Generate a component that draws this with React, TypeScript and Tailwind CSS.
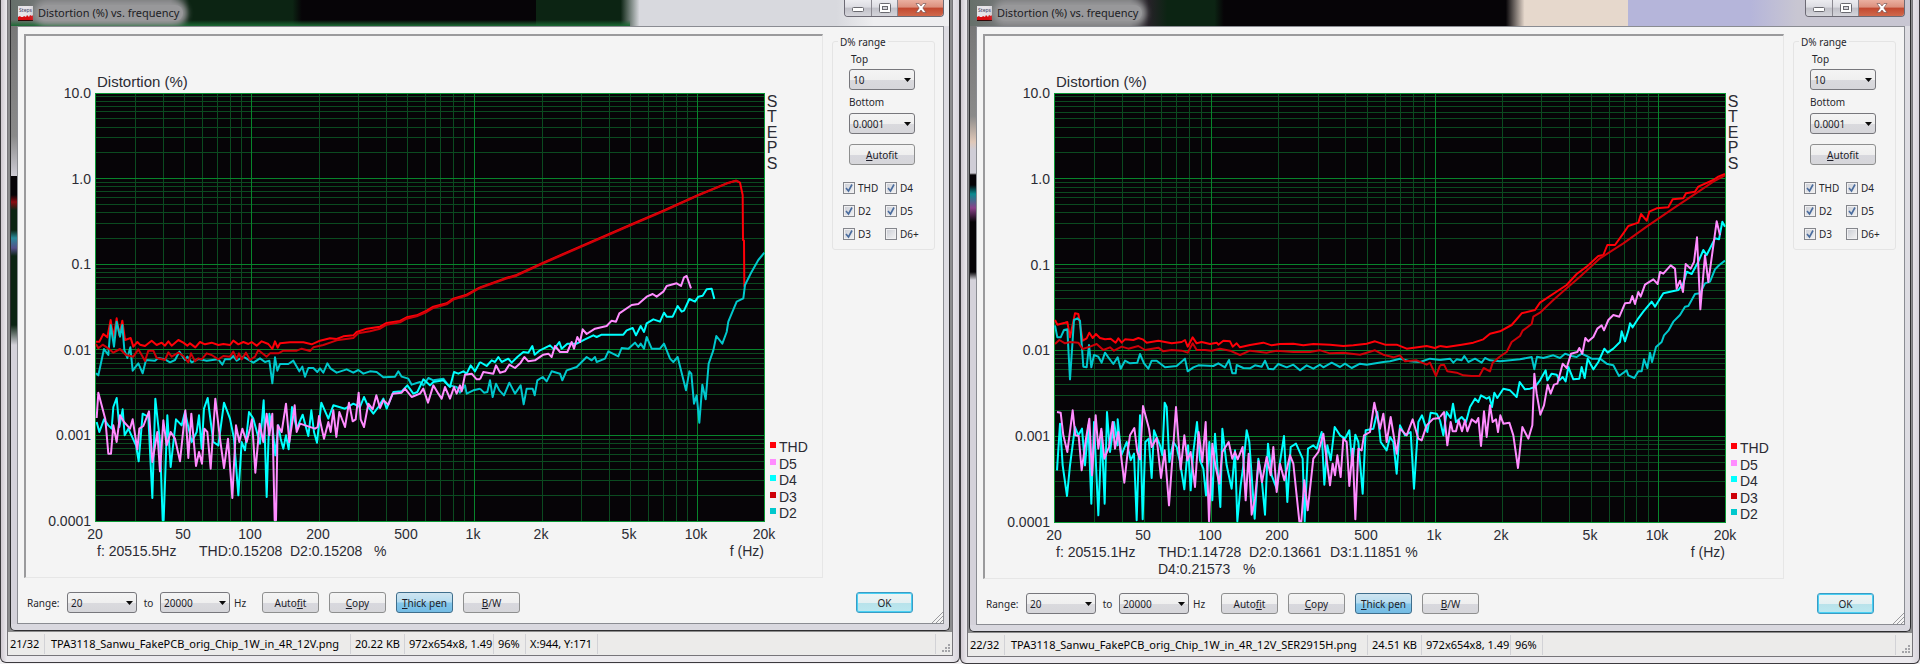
import { ReactNode } from 'react'

// Traces are sampled in thirds of a pixel. Each one is split at 1 kHz: low band, then high band.
const UNIT = 1 / 3
const HIGH_BAND = 1440

type Trace = { name: string; color: string; low: string; high: string }

type Measurement = {
  index: string
  file: string
  fileWidth: string
  size: string
  cursor?: string
  frame: string
  titleBar: string
  edge: string
  width: number
  height: number
  plotRight: number
  plotBottom: number
  originX: number
  readout: [number, number, string][]
  traces: Trace[]
}

const original: Measurement = {
  index: '21/32',
  file: 'TPA3118_Sanwu_FakePCB_orig_Chip_1W_in_4R_12V.png',
  fileWidth: 'w-[306px]',
  size: '20.22 KB',
  cursor: 'X:944, Y:171',
  frame: 'mx-[2px]',
  titleBar:
    '[background-size:66%_100%,100%_100%] bg-no-repeat bg-[linear-gradient(0deg,#1c6a34_0px,#1c6a3400_6px),linear-gradient(90deg,#66706a_0%,#77787a_4%,#77787a_17%,#0c2413_19%,#0c2413_30%,#060407_31%,#060407_56%,#0c2413_56%,#0c2413_65%,#d8d9de_67%,#d8d9de_88%,#eeeef0_92%)]',
  edge: 'bg-[linear-gradient(180deg,#777_0px,#8a8a8a_110px,#cfcdd6_150px,#cfcdd6_147px,#060407_149px,#060407_169px,#8a0a10_176px,#0c2413_184px,#0c2413_204px,#2a8a9a_212px,#55508a_222px,#0c2413_230px,#0c2413_299px,#d4d2da_319px)]',
  width: 796,
  height: 541,
  plotRight: 739,
  plotBottom: 485,
  originX: 26,
  readout: [
    [71, 520, 'f: 20515.5Hz'],
    [173, 520, 'THD:0.15208'],
    [264, 520, 'D2:0.15208'],
    [348, 520, '%'],
  ],
  traces: [
    {
      name: 'THD',
      color: '#ff0008',
      low: '288,29 298,29 310,6 322,16 332,-36 340,16 350,-41 358,9 367,-34 375,24 392,18 400,44 412,30 420,38 435,42 455,26 470,39 485,32 495,41 505,28 515,41 535,24 550,32 562,41 570,34 586,46 600,30 615,37 635,32 655,39 670,36 690,39 700,26 715,37 730,30 745,36 755,30 770,41 785,28 805,36 817,51 825,28 833,47 840,34 870,31 910,31 935,37 960,26 990,19 1010,21 1030,13 1060,10 1070,0 1100,-10 1140,-16 1160,-27 1200,-33 1220,-44 1250,-50 1280,-64 1300,-76 1340,-86 1360,-100 1400,-112 1440,-134',
      high: '0,-134 75,-161 110,-171 185,-206 300,-256 450,-321 550,-364 655,-411 740,-446 768,-454 780,-448 788,-411 789,-276 792,-274 793,-136',
    },
    {
      name: 'D2',
      color: '#00c8cd',
      low: '288,124 295,130 312,51 325,69 332,-21 342,44 350,-31 360,14 367,-21 373,54 382,78 391,46 398,116 415,94 428,124 438,84 465,86 475,78 495,82 510,91 525,84 538,59 555,84 562,74 575,91 595,81 620,86 655,82 667,98 675,82 690,82 700,72 710,86 730,74 760,92 780,79 795,90 808,86 817,154 825,76 832,116 840,96 865,96 880,86 898,118 907,104 915,134 925,108 940,108 952,120 960,109 970,122 982,94 992,110 1010,122 1040,112 1060,122 1075,114 1090,125 1110,118 1130,120 1150,136 1185,134 1195,118 1205,134 1225,140 1235,158 1260,150 1270,160 1285,138 1300,145 1330,140 1345,160 1370,165 1380,182 1395,160 1400,185 1420,175 1440,170',
      high: '0,170 12,182 22,180 30,145 38,195 48,155 58,175 72,190 88,152 105,185 122,160 131,217 140,170 158,170 164,190 172,145 188,135 200,148 215,118 240,125 247,145 260,115 290,105 320,75 335,85 345,75 350,90 375,80 385,58 415,73 425,48 445,50 465,32 475,45 482,35 492,50 500,15 515,50 540,50 552,35 570,80 580,90 593,75 618,175 628,118 634,125 642,215 650,190 658,272 667,158 677,202 686,95 700,55 709,12 727,35 740,0 745,-31 770,-91 790,-101 795,-141 815,-181 835,-216 853,-238',
    },
    {
      name: 'D3',
      color: '#cd0008',
      low: '288,36 295,49 308,38 325,49 340,62 360,51 378,69 400,74 415,52 425,69 435,87 445,56 460,56 470,78 495,84 505,61 515,74 535,62 550,72 565,91 573,64 585,88 595,79 605,82 620,64 635,69 655,82 670,72 690,74 700,59 710,81 717,64 725,82 738,62 750,84 765,74 775,54 800,74 810,64 835,64 850,56 890,56 905,50 930,57 940,46 970,39 1010,25 1060,18 1075,4 1110,-2 1140,-10 1160,-22 1200,-29 1220,-40 1250,-47 1280,-60 1300,-72 1340,-83 1360,-97 1400,-109 1440,-132',
      high: '0,-132 75,-159 110,-169 185,-204 300,-254 450,-319 550,-362 655,-410 740,-445 768,-454 776,-450',
    },
    {
      name: 'D4',
      color: '#00ffff',
      low: '290,270 298,300 312,262 325,280 335,290 340,225 350,198 358,285 368,232 374,310 385,290 408,340 416,388 428,245 445,255 457,498 466,200 480,330 488,565 491,565 502,250 512,405 528,262 545,280 555,240 575,330 590,300 597,250 605,350 612,230 623,198 640,330 655,340 672,212 690,260 702,320 715,490 725,330 735,355 747,240 760,260 780,335 791,205 800,495 808,245 818,290 826,370 835,280 842,320 850,350 858,310 866,352 876,225 890,290 908,248 925,312 934,235 942,300 951,332 964,212 985,260 1000,220 1035,230 1060,215 1080,225 1092,195 1105,225 1120,245 1135,225 1150,200 1160,230 1180,180 1205,178 1222,160 1240,185 1252,180 1270,142 1290,160 1300,150 1330,145 1350,165 1362,120 1375,125 1390,118 1400,125 1412,100 1425,118 1440,90',
      high: '0,90 20,102 35,85 45,90 55,75 65,90 85,80 95,92 112,75 130,60 145,62 157,42 164,68 180,55 210,40 222,52 238,30 245,50 262,35 290,35 315,22 340,10 350,15 365,8 430,8 440,-5 458,-12 468,10 482,-18 492,0 500,-26 520,-38 540,-31 552,-58 560,-46 578,-46 593,-78 605,-61 612,-64 628,-99 645,-91 655,-106 668,-109 680,-128 695,-130 703,-99',
    },
    {
      name: 'D5',
      color: '#ff8cff',
      low: '290,258 295,182 316,262 325,365 333,365 340,280 350,330 360,250 372,270 390,290 398,262 412,352 418,290 430,282 447,238 457,390 472,300 480,418 490,265 500,340 512,300 525,320 540,388 556,235 565,378 574,245 588,402 597,360 606,395 613,290 622,300 632,410 646,200 660,320 672,408 684,320 697,498 708,280 718,330 727,290 740,330 750,290 756,262 766,422 779,275 790,330 800,245 808,310 817,245 824,565 828,565 833,280 845,300 858,215 868,330 884,220 890,300 900,275 945,290 953,285 957,252 972,320 985,270 992,300 1000,235 1009,315 1018,240 1035,285 1047,212 1058,268 1067,262 1076,182 1082,262 1092,285 1105,215 1118,232 1129,190 1140,228 1150,205 1165,218 1178,185 1205,182 1215,170 1235,195 1260,185 1270,170 1284,212 1300,160 1315,185 1325,200 1335,165 1350,200 1362,165 1370,185 1380,160 1385,178 1395,128 1415,125 1430,142 1440,142',
      high: '0,142 10,120 40,125 48,100 60,122 75,118 88,98 105,108 122,92 133,75 145,88 165,85 190,68 205,65 215,75 225,42 240,60 262,60 275,30 282,50 292,15 300,30 308,-8 320,6 345,-10 380,-18 395,-34 408,-31 418,-56 455,-81 475,-84 500,-106 518,-114 530,-106 550,-121 560,-138 590,-146 603,-138 612,-164 620,-168 633,-131',
    },
  ],
}

const modified: Measurement = {
  index: '22/32',
  file: 'TPA3118_Sanwu_FakePCB_orig_Chip_1W_in_4R_12V_SER2915H.png',
  fileWidth: 'w-[363px]',
  size: '24.51 KB',
  frame: 'mx-px',
  titleBar:
    'bg-[linear-gradient(90deg,#66706a_0%,#77787a_4%,#77787a_17%,#262228_19%,#0c2413_21%,#0c2413_26%,#060407_27%,#060407_57%,#e6d8cc_59%,#e6d8cc_70%,#b5b5da_70%,#b5b5da_83%,#c8c6d2_88%)]',
  edge: 'bg-[linear-gradient(180deg,#777_0px,#8a8a8a_90px,#e0c8b8_116px,#cfcdd6_124px,#cfcdd6_147px,#060407_149px,#060407_159px,#0a8a90_168px,#8a408a_182px,#060407_196px,#060407_246px,#d4d2da_254px)]',
  width: 798,
  height: 542,
  plotRight: 741,
  plotBottom: 486,
  originX: 25,
  readout: [
    [71, 521, 'f: 20515.1Hz'],
    [173, 521, 'THD:1.14728'],
    [264, 521, 'D2:0.13661'],
    [345, 521, 'D3:1.11851 %'],
    [173, 538, 'D4:0.21573'],
    [258, 538, '%'],
  ],
  traces: [
    {
      name: 'THD',
      color: '#ff0008',
      low: '285,-36 292,-22 315,-28 322,-30 330,16 345,-56 355,-54 368,26 380,19 388,2 398,18 408,6 420,18 435,22 452,20 467,32 475,19 485,32 495,22 520,24 535,18 548,22 560,32 595,26 615,30 635,34 665,30 675,24 683,44 698,16 710,34 725,30 750,36 770,32 775,38 790,26 810,28 818,44 830,34 840,46 870,39 910,32 935,40 960,36 1000,35 1030,40 1060,36 1110,38 1150,42 1180,40 1220,35 1245,28 1275,38 1310,38 1340,50 1400,42 1425,48 1440,42',
      high: '0,42 20,45 65,38 100,32 130,22 150,5 180,-2 215,-21 245,-56 285,-66 300,-88 380,-141 410,-174 440,-196 475,-228 490,-231 502,-261 525,-261 550,-296 565,-318 595,-328 603,-354 620,-334 628,-361 650,-371 685,-374 698,-398 730,-401 738,-416 765,-421 775,-436 820,-456 835,-466 855,-474',
    },
    {
      name: 'D2',
      color: '#00c8cd',
      low: '285,-20 292,16 302,16 312,-6 322,-8 330,142 342,-36 352,-41 360,-34 370,104 380,106 387,39 394,106 402,69 415,74 425,92 435,62 445,76 460,96 473,76 482,110 495,86 510,94 532,92 540,66 552,94 565,110 575,86 590,86 615,106 650,102 675,80 683,118 700,106 715,100 760,102 775,94 795,106 807,84 817,124 827,124 830,99 850,108 870,109 885,100 905,104 915,86 925,110 940,112 955,96 980,106 1000,98 1020,115 1040,100 1060,110 1080,98 1090,106 1115,92 1140,105 1155,95 1175,108 1200,95 1220,98 1270,90 1290,88 1320,80 1350,88 1380,90 1410,80 1440,84',
      high: '0,84 30,80 40,92 50,82 65,85 73,72 85,90 105,80 125,92 135,78 150,85 180,88 240,82 275,75 283,112 291,74 310,78 340,70 360,78 375,65 395,72 410,75 425,65 440,72 455,80 480,80 500,95 520,100 537,132 560,115 565,130 583,138 595,118 605,118 612,82 622,108 630,62 636,90 648,45 665,30 672,10 685,-4 700,-31 720,-51 735,-76 745,-78 765,-114 780,-116 795,-146 810,-151 825,-188 838,-201 855,-214',
    },
    {
      name: 'D3',
      color: '#cd0008',
      low: '285,36 298,24 315,34 330,30 355,32 368,51 390,44 410,36 430,54 450,46 462,56 485,44 505,50 535,42 555,54 595,47 610,58 635,54 665,56 683,62 698,34 710,54 735,54 755,56 780,50 810,56 840,69 870,56 920,62 950,56 1000,60 1050,60 1080,55 1110,64 1150,62 1200,68 1245,55 1270,68 1300,76 1320,70 1335,88 1370,85 1400,98 1410,92 1428,132 1440,100',
      high: '0,100 12,98 22,118 50,122 70,130 95,132 118,132 131,108 150,118 158,92 178,75 200,60 215,30 240,12 248,-4 275,-24 280,-46 300,-58 340,-96 385,-136 420,-166 480,-221 550,-266 620,-316 700,-371 780,-424 820,-451 855,-470',
    },
    {
      name: 'D4',
      color: '#00ffff',
      low: '291,415 300,275 308,400 321,492 330,400 345,285 355,310 366,290 375,400 385,280 394,515 402,270 415,550 425,300 434,515 441,240 450,360 462,270 473,340 473,262 484,370 500,330 512,385 522,365 530,565 540,250 548,562 556,330 566,320 575,438 582,295 600,340 607,370 614,212 620,225 628,390 640,330 650,345 660,390 673,472 684,340 692,475 700,360 711,270 720,385 730,410 738,490 748,330 757,505 765,305 781,525 787,290 800,400 815,470 825,355 832,568 842,460 850,400 860,295 868,330 884,560 895,380 905,440 915,548 924,335 935,430 950,470 960,390 972,312 982,510 992,345 1008,335 1028,380 1034,568 1044,350 1060,340 1070,350 1085,300 1093,458 1102,340 1112,385 1124,285 1140,310 1155,320 1168,295 1177,400 1186,308 1195,330 1208,485 1217,295 1240,290 1252,240 1262,330 1280,355 1290,315 1300,330 1310,425 1320,280 1335,310 1352,300 1362,470 1375,270 1386,250 1402,300 1412,242 1430,245 1440,265',
      high: '0,265 10,310 20,240 32,258 39,215 48,270 65,255 78,270 90,225 105,200 115,210 123,190 140,200 148,195 156,225 163,182 172,198 190,170 210,175 230,195 239,150 255,172 270,170 285,165 300,145 317,115 322,145 335,125 350,128 358,145 368,135 377,148 385,105 400,142 418,140 425,105 434,138 443,80 460,112 475,90 493,50 503,62 520,50 540,30 545,-2 555,28 565,-4 570,-26 578,-14 595,-41 610,-61 635,-91 645,-76 670,-116 715,-126 730,-146 740,-181 755,-174 775,-211 790,-246 800,-231 825,-281 837,-278 847,-331 855,-316',
    },
    {
      name: 'D5',
      color: '#ff8cff',
      low: '291,240 302,242 310,310 322,360 338,235 346,310 356,312 365,415 378,320 388,260 396,430 407,250 415,350 424,290 433,380 447,345 458,270 465,350 475,300 483,370 493,452 503,360 510,310 523,288 532,360 540,382 549,222 567,290 575,345 590,318 603,438 614,355 627,520 640,340 648,225 662,412 673,310 682,385 692,360 705,465 716,300 727,390 737,270 747,568 757,335 766,400 778,455 787,360 806,330 817,380 825,360 833,382 848,345 857,505 866,365 875,548 885,500 896,388 906,450 920,375 932,430 940,345 950,480 960,395 973,445 990,370 1000,395 1018,568 1024,568 1033,445 1043,535 1060,380 1075,360 1090,305 1110,460 1118,395 1125,430 1132,370 1142,435 1150,320 1160,330 1168,462 1178,350 1186,562 1195,350 1205,355 1212,310 1230,300 1243,212 1250,245 1260,290 1270,245 1280,330 1292,255 1310,365 1320,290 1340,310 1358,262 1375,320 1385,325 1400,280 1420,260 1440,258',
      high: '0,255 12,240 22,340 32,270 38,298 48,298 56,265 66,298 75,265 82,298 95,262 108,272 115,258 123,342 132,238 140,315 150,220 158,270 168,262 174,300 181,250 190,275 208,272 220,310 234,408 247,285 265,320 277,280 283,125 290,185 301,248 312,220 323,158 332,185 342,158 352,155 368,95 380,108 393,65 412,60 418,48 427,65 436,18 445,28 460,15 472,-10 485,-20 492,-5 505,-36 520,-51 538,-46 555,-86 570,-88 577,-108 585,-84 595,-120 602,-106 615,-142 640,-158 653,-144 660,-180 670,-175 692,-200 705,-190 710,-130 720,-154 729,-120 737,-204 752,-190 762,-210 771,-284 781,-68 795,-230 805,-150 830,-332 840,-290',
    },
  ],
}

const PLOT_LEFT = 70
const PLOT_TOP = 57

const xTicks: [number, string][] = [
  [20, '20'], [50, '50'], [100, '100'], [200, '200'], [500, '500'],
  [1000, '1k'], [2000, '2k'], [5000, '5k'], [10000, '10k'], [20000, '20k'],
]
const yTicks = ['10.0', '1.0', '0.1', '0.01', '0.001', '0.0001']

function Chart({ m }: { m: Measurement }) {
  const right = m.plotRight
  const bottom = m.plotBottom
  const decade = (bottom - PLOT_TOP) / 5
  const fx = (hz: number) => Math.floor(PLOT_LEFT + (Math.log10(hz / 20) / 3) * (right - PLOT_LEFT)) + 0.5

  const vertical: { pos: number; major: boolean }[] = []
  for (const base of [10, 100, 1000, 10000]) {
    for (let k = 1; k < 10; k++) {
      const hz = base * k
      if (hz > 20 && hz < 20000) vertical.push({ pos: fx(hz), major: k === 1 })
    }
  }
  const horizontal: { pos: number; major: boolean }[] = []
  for (let d = 0; d < 5; d++) {
    for (let k = 2; k <= 10; k++) {
      horizontal.push({ pos: Math.floor(PLOT_TOP + decade * (d + 1 - Math.log10(k))) + 0.5, major: k === 10 })
    }
  }

  return (
    <svg viewBox={`0 0 ${m.width} ${m.height}`} className="block h-auto w-full font-[Liberation_Sans,Arial,sans-serif]" fill="#2b2b33" fontSize="14">
      <text x={PLOT_LEFT + 1} y="51" fontSize="15">Distortion (%)</text>
      <rect x={PLOT_LEFT} y={PLOT_TOP} width={right - PLOT_LEFT} height={bottom - PLOT_TOP} fill="#060407" />
      <g shapeRendering="crispEdges">
        {[false, true].map((major) => (
          <g key={String(major)} stroke={major ? '#07842b' : '#0b4a20'}>
            {vertical.filter((l) => l.major === major).map((l) => (
              <line key={`v${l.pos}`} x1={l.pos} x2={l.pos} y1={PLOT_TOP} y2={bottom} />
            ))}
            {horizontal.filter((l) => l.major === major).map((l) => (
              <line key={`h${l.pos}`} y1={l.pos} y2={l.pos} x1={PLOT_LEFT} x2={right} />
            ))}
          </g>
        ))}
        <rect x={PLOT_LEFT - 0.5} y={PLOT_TOP + 0.5} width={right - PLOT_LEFT} height={bottom - PLOT_TOP} fill="none" stroke="#0a9a35" />
      </g>
      <g transform={`translate(${-m.originX} 296) scale(${UNIT})`} fill="none" strokeWidth="6" strokeLinejoin="round">
        {m.traces.map((t) => (
          <g key={t.name} stroke={t.color}>
            <polyline points={t.low} />
            <polyline points={t.high} transform={`translate(${HIGH_BAND} 0)`} />
          </g>
        ))}
      </g>
      {yTicks.map((label, i) => (
        <text key={label} x="65" y={Math.round(PLOT_TOP + decade * i) + 5} textAnchor="end">{label}</text>
      ))}
      {xTicks.map(([hz, label]) => (
        <text key={label} x={Math.floor(fx(hz)) - 1} y={bottom + 18} textAnchor="middle">{label}</text>
      ))}
      {m.readout.map(([x, y, label]) => (
        <text key={label} x={x} y={y}>{label}</text>
      ))}
      <text x={right - 1} y={bottom + 35} textAnchor="end">f (Hz)</text>
      <g fontSize="16">
        {'STEPS'.split('').map((letter, i) => (
          <text key={i} x={right + 7} y={Math.round(71 + i * 15.4)} textAnchor="middle">{letter}</text>
        ))}
      </g>
      {['THD', 'D5', 'D4', 'D3', 'D2'].map((name, i) => {
        const y = Math.round(bottom - 79 + i * 16.5)
        return (
          <g key={name}>
            <rect x={right + 5} y={y} width="6" height="6" fill={m.traces.find((t) => t.name === name)?.color} />
            <text x={right + 14} y={y + 10}>{name}</text>
          </g>
        )
      })}
    </svg>
  )
}

function Button({ children, className = '' }: { children: ReactNode; className?: string }) {
  return (
    <button
      type="button"
      className={`h-[21px] rounded-[3px] border text-center text-[#1c1c28] ${className || 'border-[#8e8f8f] bg-[linear-gradient(180deg,#f4f4f4_0%,#efefef_50%,#d8d8de_51%,#d6d6da_100%)]'}`}
    >
      {children}
    </button>
  )
}

function Select({ id, value, className }: { id: string; value: string; className: string }) {
  return (
    <div className={`relative ${className}`}>
      <select
        id={id}
        defaultValue={value}
        className="block h-[21px] w-full appearance-none rounded-[3px] border border-[#77777c] bg-[linear-gradient(180deg,#f4f4f4_0%,#efefef_50%,#dadade_51%,#d6d6da_100%)] pl-[3px] text-[#1c1c28]"
      >
        <option>{value}</option>
      </select>
      <svg viewBox="0 0 7 4" className="pointer-events-none absolute top-[9px] right-1 h-1 w-[7px]">
        <path d="M0 0h7L3.500 4z" fill="#0a0a0a" />
      </svg>
    </div>
  )
}

function Check({ id, label, checked = true }: { id: string; label: string; checked?: boolean }) {
  return (
    <div className="flex h-[23px] items-center gap-[3px]">
      <span className="relative block h-3 w-3">
        <input
          id={id}
          type="checkbox"
          defaultChecked={checked}
          className="peer block h-3 w-3 appearance-none border border-[#84868c] bg-[linear-gradient(135deg,#c9ccd4,#f4f4f4)] outline-1 -outline-offset-2 outline-[#f0f0f2]"
        />
        <svg viewBox="0 0 12 12" className="pointer-events-none absolute inset-0 hidden h-3 w-3 peer-checked:block">
          <path d="M3 6l2.500 3L9 2.500" fill="none" stroke="#4a6c9e" strokeWidth="1.600" />
        </svg>
      </span>
      <label htmlFor={id}>{label}</label>
    </div>
  )
}

function WindowButtons() {
  return (
    <div className="flex h-[17px] w-[100px] overflow-hidden rounded-b-[4px] border border-t-0 border-[#6c6a74]">
      <button type="button" aria-label="Minimize" className="flex w-[27px] items-center justify-center border-r border-[#8a8890] bg-[linear-gradient(180deg,#ececf0_0%,#dcdce2_45%,#c0c0c8_50%,#d4d4da_100%)]">
        <svg viewBox="0 0 12 6" className="mt-1 h-[6px] w-3">
          <rect x="0.500" y="0.500" width="11" height="4" rx="1" fill="#fff" stroke="#6a6a70" />
        </svg>
      </button>
      <button type="button" aria-label="Maximize" className="flex w-[26px] items-center justify-center border-r border-[#8a8890] bg-[linear-gradient(180deg,#ececf0_0%,#dcdce2_45%,#c0c0c8_50%,#d4d4da_100%)]">
        <svg viewBox="0 0 12 10" className="h-[10px] w-3">
          <rect x="0.500" y="0.500" width="11" height="9" rx="1" fill="#fff" stroke="#6a6a70" />
          <rect x="3.500" y="3.500" width="5" height="3" fill="#d4d4da" stroke="#6a6a70" />
        </svg>
      </button>
      <button type="button" aria-label="Close" className="flex flex-1 items-center justify-center bg-[linear-gradient(180deg,#eab0a0_0%,#dc8f7c_45%,#c2482f_50%,#d0694c_100%)]">
        <svg viewBox="0 0 12 10" className="h-[10px] w-3">
          <path d="M1 0.500h3l2 2.500 2-2.500h3L7.800 5 11 9.500H8L6 7 4 9.500H1L4.200 5z" fill="#fff" stroke="#6a4a4a" strokeWidth="0.600" />
        </svg>
      </button>
    </div>
  )
}

function Dialog({ m, id }: { m: Measurement; id: string }) {
  return (
    <section className={`${m.frame} rounded-b-[5px] border border-t-0 border-[#2e2e30] bg-[#d9d8df] font-[Noto_Sans,sans-serif] text-[10px] leading-4 text-[#26262c]`}>
      <header className={`flex h-[26px] items-start justify-between pr-[5px] pl-[7px] ${m.titleBar}`}>
        <div className="flex items-center gap-[5px] pt-[5px]">
          <svg viewBox="0 0 15 15" className="h-[15px] w-[15px]">
            <rect width="15" height="15" fill="#e6e4e8" />
            <text x="7.500" y="6" fontSize="5" textAnchor="middle" fill="#3a3a60">Steps</text>
            <path d="M0 15V11l2-1 1 1 2 0 1-1 2 1 1-2 2 2 1-2 2 1 1-1v6z" fill="#d80c10" />
            <path d="M0 14h15v1H0z" fill="#300808" />
          </svg>
          <h1 className="rounded-full bg-[#98989a] pr-1 text-[11px] text-[#202024] shadow-[0_0_6px_4px_#98989a]">Distortion (%) vs. frequency</h1>
        </div>
        <WindowButtons />
      </header>
      <div className="flex">
        <div className={`w-[6px] ${m.edge}`} />
        <div className="relative flex-1 border border-[#8a8c92] bg-[#f4f4f4] pb-[10px]">
          <div className="flex items-start pt-[7px] pr-[8px] pl-[6px]">
            <div className="flex-1 border-t-2 border-r border-b border-l-2 border-t-[#9a9a9c] border-r-[#e6e6e6] border-b-[#e6e6e6] border-l-[#9a9a9c]">
              <Chart m={m} />
            </div>
            <fieldset className="ml-[9px] w-[103px] rounded-[3px] border border-[#e4e4e4] px-[10px] pb-[4px]">
              <legend className="-ml-[5px] h-[15px] px-[2px]">D% range</legend>
              <div className="flex flex-col pl-[6px]">
                <label htmlFor={`${id}-top`} className="mt-[2px] mb-[2px] pl-[2px]">Top</label>
                <Select id={`${id}-top`} value="10" className="w-[66px]" />
                <label htmlFor={`${id}-bottom`} className="mt-[4px] mb-[3px]">Bottom</label>
                <Select id={`${id}-bottom`} value="0.0001" className="w-[66px]" />
                <div className="mt-[10px] grid w-[66px]">
                  <Button><u>A</u>utofit</Button>
                </div>
              </div>
              <div className="mt-[11px] grid grid-cols-[42px_1fr]">
                <Check id={`${id}-thd`} label="THD" />
                <Check id={`${id}-d4`} label="D4" />
                <Check id={`${id}-d2`} label="D2" />
                <Check id={`${id}-d5`} label="D5" />
                <Check id={`${id}-d3`} label="D3" />
                <Check id={`${id}-d6`} label="D6+" checked={false} />
              </div>
            </fieldset>
          </div>
          <div className="mt-[14px] flex items-center pr-[30px] pl-[9px]">
            <label htmlFor={`${id}-from`} className="w-10">Range:</label>
            <Select id={`${id}-from`} value="20" className="w-[70px]" />
            <label htmlFor={`${id}-to`} className="w-[23px] text-center">to</label>
            <Select id={`${id}-to`} value="20000" className="w-[70px]" />
            <span className="w-8 pl-1">Hz</span>
            <div className="grid grid-cols-[57px_57px_57px_57px] gap-[10px]">
              <Button>Auto<u>f</u>it</Button>
              <Button><u>C</u>opy</Button>
              <Button className="border-[#3f6e8c] bg-[linear-gradient(180deg,#cfe4f0_0%,#b4dcf0_48%,#84c6ea_52%,#74bce4_100%)]"><u>T</u>hick pen</Button>
              <Button><u>B</u>/W</Button>
            </div>
            <div className="ml-auto grid w-[57px]">
              <Button className="border-[#3a9cc4] bg-[linear-gradient(180deg,#eef4f4_0%,#e4f0f2_50%,#b8e2ea_51%,#bce8f0_100%)] shadow-[inset_0_0_0_1px_#48d0f4]">OK</Button>
            </div>
          </div>
          <svg viewBox="0 0 11 11" className="absolute right-0 bottom-0 h-[11px] w-[11px]">
            <path d="M0 11L11 0M4 11L11 4M8 11L11 8" stroke="#9a9a9e" />
          </svg>
        </div>
        <div className="w-[5px] bg-[#dddce2]" />
      </div>
      <div className="h-[6px]" />
    </section>
  )
}

function StatusBar({ m }: { m: Measurement }) {
  return (
    <footer className="flex h-[24px] items-center border-t border-[#8c8c8c] bg-[#ecebea] font-[Noto_Sans,sans-serif] text-[11px] leading-5 whitespace-nowrap text-black">
      <span className="w-[37px] border-r border-[#d2d2d6] pl-[2px]">{m.index}</span>
      <span className={`${m.fileWidth} border-r border-[#d2d2d6] pl-[6px]`}>{m.file}</span>
      <span className="w-[54px] border-r border-[#d2d2d6] pl-1">{m.size}</span>
      <span className="w-[89px] border-r border-[#d2d2d6] pl-1">972x654x8, 1.49</span>
      <span className="w-8 border-r border-[#d2d2d6] pl-1">96%</span>
      {m.cursor && <span className="w-[72px] border-r border-[#d2d2d6] pl-1">{m.cursor}</span>}
      <span className="ml-auto flex h-5 w-[17px] items-end justify-end border-l border-[#d2d2d6] pr-[2px] pb-[2px]">
        <svg viewBox="0 0 8 8" className="h-2 w-2" fill="#a4a4a8">
          <path d="M6 0h2v2H6zM3 3h2v2H3zM6 3h2v2H6zM0 6h2v2H0zM3 6h2v2H3zM6 6h2v2H6z" />
        </svg>
      </span>
    </footer>
  )
}

function Viewer({ m, id }: { m: Measurement; id: string }) {
  return (
    <div className="flex-1 rounded-b-[6px] border-x border-b border-[#3c3a3e] bg-[linear-gradient(90deg,#cfc8d0_0px,#eceaee_6px,#eceaee_99%,#d8d4dc_100%)] px-[6px] pb-[6px]">
      <div className="border-x border-b border-[#77757a] bg-[#8c8c8e]">
        <Dialog m={m} id={id} />
        <StatusBar m={m} />
      </div>
    </div>
  )
}

function App() {
  return (
    <main className="flex min-h-screen items-start bg-[#f2f0f2]">
      <Viewer m={original} id="original" />
      <Viewer m={modified} id="modified" />
    </main>
  )
}

export default App
